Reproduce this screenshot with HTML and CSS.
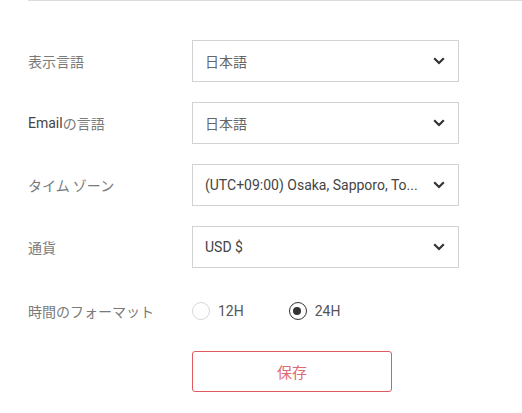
FILE: index.html
```html
<!DOCTYPE html>
<html lang="ja">
<head>
<meta charset="utf-8">
<link rel="stylesheet" href="styles.css">
</head>
<body>
<div class="page">
  <div class="rule"></div>
  <form class="form">
    <div class="label">表示言語</div>
    <div class="select"><span class="value">日本語</span><svg class="chev" viewBox="0 0 12 8" width="12" height="8"><path d="M1.2 1.2 L6 6 L10.8 1.2" fill="none" stroke="#333" stroke-width="2.2"/></svg></div>

    <div class="label"><span class="latin">Email</span>の言語</div>
    <div class="select"><span class="value">日本語</span><svg class="chev" viewBox="0 0 12 8" width="12" height="8"><path d="M1.2 1.2 L6 6 L10.8 1.2" fill="none" stroke="#333" stroke-width="2.2"/></svg></div>

    <div class="label">タイム ゾーン</div>
    <div class="select"><span class="value latin">(UTC+09:00) Osaka, Sapporo, To...</span><svg class="chev" viewBox="0 0 12 8" width="12" height="8"><path d="M1.2 1.2 L6 6 L10.8 1.2" fill="none" stroke="#333" stroke-width="2.2"/></svg></div>

    <div class="label">通貨</div>
    <div class="select"><span class="value latin">USD $</span><svg class="chev" viewBox="0 0 12 8" width="12" height="8"><path d="M1.2 1.2 L6 6 L10.8 1.2" fill="none" stroke="#333" stroke-width="2.2"/></svg></div>

    <div class="label radio-label">時間のフォーマット</div>
    <div class="radios">
      <label class="radio"><span class="circle"></span><span class="latin">12H</span></label>
      <label class="radio"><span class="circle checked"></span><span class="latin">24H</span></label>
    </div>

    <div></div>
    <button type="button" class="save">保存</button>
  </form>
</div>
</body>
</html>
```
FILE: styles.css
```css
html, body {
  margin: 0;
  padding: 0;
  background: #fff;
}
body {
  font-family: "Noto Sans CJK JP", "Noto Sans", sans-serif;
  color: #666;
}
.page {
  padding-left: 28px;
}
.rule {
  height: 0;
  border-top: 1px solid #dcdcdc;
}
.form {
  display: grid;
  grid-template-columns: 164px 267px;
  grid-auto-rows: 42px;
  row-gap: 20px;
  margin-top: 39px;
}
.label {
  display: flex;
  align-items: center;
  font-size: 14px;
  color: #7a7a7a;
}
.latin {
  font-family: Roboto, "Noto Sans CJK JP", sans-serif;
}
.label .latin {
  color: #444;
}
.select {
  box-sizing: border-box;
  border: 1px solid #d2d2d2;
  display: flex;
  align-items: center;
  justify-content: space-between;
  padding: 0 13px 0 12px;
}
.value {
  font-size: 14px;
  color: #444;
}
.select .value:not(.latin) {
  color: #666;
}
.chev {
  display: block;
}
.radio-label {
  margin-top: 4px;
}
.radios {
  display: flex;
  align-items: center;
  gap: 45px;
  margin-top: 4px;
}
.radio {
  display: flex;
  align-items: center;
  gap: 8px;
  font-size: 14px;
  color: #555;
}
.circle {
  box-sizing: border-box;
  width: 18px;
  height: 18px;
  border-radius: 50%;
  border: 1px solid #d8d8d8;
  position: relative;
}
.circle.checked {
  border: 1.5px solid #333;
}
.circle.checked::after {
  content: "";
  position: absolute;
  left: 3.5px;
  top: 3.5px;
  width: 8px;
  height: 8px;
  border-radius: 50%;
  background: #333;
}
.save {
  box-sizing: border-box;
  width: 200px;
  height: 41px;
  margin-top: 1px;
  border: 1px solid #e05a5e;
  border-radius: 3px;
  background: #fff;
  color: #e06a72;
  font-family: "Noto Sans CJK JP", sans-serif;
  font-size: 15px;
  padding: 0;
}
```
